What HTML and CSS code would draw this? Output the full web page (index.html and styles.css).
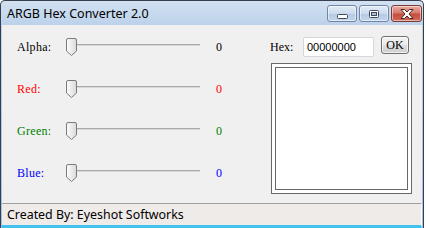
FILE: index.html
```html
<!DOCTYPE html>
<html lang="en">
  <head>
    <meta charset="utf-8">
    <title>ARGB Hex Converter 2.0</title>
    <link rel="stylesheet" href="styles.css">
  </head>
  <body>
    <div class="window">
      <div class="titlebar">
        <span class="title">ARGB Hex Converter 2.0</span>
        <div class="caption-buttons">
          <button class="cap cap-min">
            <svg width="11" height="5" viewBox="0 0 11 5"><rect x="0.5" y="0.5" width="10" height="4" rx="1" fill="#fff" stroke="#3c4a5c"/></svg>
          </button>
          <button class="cap cap-max">
            <svg width="10" height="8" viewBox="0 0 10 8"><rect x="0.5" y="0.5" width="9" height="7" rx="1" fill="#fff" stroke="#3c4a5c"/><rect x="2.5" y="2.5" width="5" height="3" fill="#aebfd6" stroke="#3c4a5c"/></svg>
          </button>
          <button class="cap cap-close">
            <svg width="14" height="10" viewBox="0 0 14 10"><path d="M1 0.5 H4.5 L7 3 L9.5 0.5 H13 L9 5 L13 9.5 H9.5 L7 7 L4.5 9.5 H1 L5 5 Z" fill="#fff" stroke="#4a2420" stroke-width="1" stroke-linejoin="round"/></svg>
          </button>
        </div>
      </div>

      <div class="client">
        <div class="channels">
          <div class="channel ch-alpha">
            <span class="label">Alpha:</span>
            <div class="slider">
              <div class="track"></div>
              <svg class="thumb" width="11" height="18" viewBox="0 0 11 18"><defs><linearGradient id="tg" x1="0" y1="0" x2="1" y2="0"><stop offset="0" stop-color="#fdfdfd"/><stop offset="1" stop-color="#d9d9d9"/></linearGradient></defs><path d="M0.5 2 Q0.5 0.5 2 0.5 H9 Q10.5 0.5 10.5 2 V13 L5.5 17.5 L0.5 13 Z" fill="url(#tg)" stroke="#7b7b7b"/></svg>
            </div>
            <span class="value">0</span>
          </div>
          <div class="channel ch-red">
            <span class="label">Red:</span>
            <div class="slider">
              <div class="track"></div>
              <svg class="thumb" width="11" height="18" viewBox="0 0 11 18"><path d="M0.5 2 Q0.5 0.5 2 0.5 H9 Q10.5 0.5 10.5 2 V13 L5.5 17.5 L0.5 13 Z" fill="url(#tg)" stroke="#7b7b7b"/></svg>
            </div>
            <span class="value">0</span>
          </div>
          <div class="channel ch-green">
            <span class="label">Green:</span>
            <div class="slider">
              <div class="track"></div>
              <svg class="thumb" width="11" height="18" viewBox="0 0 11 18"><path d="M0.5 2 Q0.5 0.5 2 0.5 H9 Q10.5 0.5 10.5 2 V13 L5.5 17.5 L0.5 13 Z" fill="url(#tg)" stroke="#7b7b7b"/></svg>
            </div>
            <span class="value">0</span>
          </div>
          <div class="channel ch-blue">
            <span class="label">Blue:</span>
            <div class="slider">
              <div class="track"></div>
              <svg class="thumb" width="11" height="18" viewBox="0 0 11 18"><path d="M0.5 2 Q0.5 0.5 2 0.5 H9 Q10.5 0.5 10.5 2 V13 L5.5 17.5 L0.5 13 Z" fill="url(#tg)" stroke="#7b7b7b"/></svg>
            </div>
            <span class="value">0</span>
          </div>
        </div>

        <div class="output">
          <div class="hex-row">
            <label class="hex-label" for="hex">Hex:</label>
            <input class="hex-input" id="hex" type="text" value="00000000">
            <button class="ok-button">OK</button>
          </div>
          <div class="preview">
            <div class="swatch"></div>
          </div>
        </div>
      </div>

      <div class="statusbar">Created By: Eyeshot Softworks</div>
    </div>
  </body>
</html>
```

FILE: styles.css
```css
html, body {
  margin: 0;
  padding: 0;
  width: 426px;
  height: 228px;
  overflow: hidden;
  background: #ffffff;
}
.window {
  box-sizing: border-box;
  width: 424px;
  height: 228px;
  display: flex;
  flex-direction: column;
  border: 1px solid #34404e;
  border-bottom: none;
  border-radius: 5px 5px 0 0;
  padding: 0 1px 0 1px;
  background: linear-gradient(#d3e1f1, #bcd2eb 24px, #9fc0e3);
}
.titlebar {
  height: 24px;
  display: flex;
  align-items: flex-start;
  font-family: "Noto Sans", sans-serif;
}
.title {
  font-size: 12.5px;
  line-height: 24px;
  padding: 1px 0 0 5px;
  color: #000;
}
.caption-buttons {
  margin-left: auto;
  margin-top: 4px;
  display: flex;
  gap: 2px;
}
.cap {
  box-sizing: border-box;
  width: 30px;
  height: 17px;
  padding: 0;
  display: flex;
  align-items: center;
  justify-content: center;
  border: 1px solid #6f86a6;
  border-radius: 3px;
  background: linear-gradient(#e4edf7, #cbdaec 50%, #b4c9e3 51%, #c3d6ec);
  box-shadow: inset 0 0 0 1px rgba(255,255,255,0.5);
}
.cap-min svg {
  margin-top: 6px;
}
.cap-max svg {
  margin-top: 1px;
}
.cap-close {
  width: 31px;
  border-color: #7d3a33;
  background: linear-gradient(#e9aca1, #d67c6d 45%, #c64e40 55%, #cf6a58);
}
.client {
  height: 178px;
  display: flex;
  background: #f0f0f0;
}
.channels {
  width: 268px;
  padding-top: 1px;
}
.channel {
  height: 42px;
  display: flex;
  align-items: center;
  padding-left: 15px;
  font-family: "Liberation Serif", serif;
  font-size: 12px;
  letter-spacing: 0.3px;
}
.label {
  width: 49px;
}
.slider {
  position: relative;
  width: 134px;
  height: 18px;
}
.track {
  position: absolute;
  left: 4px;
  right: 0;
  top: 6px;
  height: 1px;
  background: #a9a9a9;
  border-bottom: 1px solid #d8d8d8;
}
.thumb {
  position: absolute;
  left: 0;
  top: 0;
  display: block;
}
.value {
  margin-left: 16px;
}
.ch-alpha { color: #000000; }
.ch-red { color: #ff0000; }
.ch-green { color: #008000; }
.ch-blue { color: #0000ff; }

.output {
  padding-top: 11px;
}
.hex-row {
  display: flex;
  align-items: flex-start;
  height: 21px;
}
.hex-label {
  width: 33px;
  margin-top: 1px;
  line-height: 20px;
  font-family: "Liberation Serif", serif;
  font-size: 12px;
}
.hex-input {
  box-sizing: border-box;
  width: 71px;
  height: 20px;
  margin: 1px 0 0 0;
  padding: 0 3px;
  border: 1px solid #d3d7de;
  border-radius: 2px;
  background: #fff;
  font-family: "Liberation Sans", sans-serif;
  font-size: 11px;
  color: #000;
}
.ok-button {
  box-sizing: border-box;
  width: 28px;
  height: 18px;
  margin-left: 7px;
  padding: 0;
  border: 1px solid #707070;
  border-radius: 3px;
  background: linear-gradient(#f2f2f2, #ebebeb 50%, #dddddd 51%, #cfcfcf);
  box-shadow: inset 0 0 0 1px rgba(255,255,255,0.7);
  font-family: "Liberation Serif", serif;
  font-size: 12px;
  color: #000;
}
.preview {
  box-sizing: border-box;
  width: 141px;
  height: 131px;
  margin: 6px 0 0 1px;
  padding: 3px;
  border: 1px solid #686868;
  background: #fff;
}
.swatch {
  box-sizing: border-box;
  width: 100%;
  height: 100%;
  border: 1px solid #686868;
  background: #fff;
}
.statusbar {
  box-sizing: border-box;
  height: 25px;
  padding: 0 0 0 5px;
  border-top: 1px solid #a0a0a0;
  border-right: 1px solid #ffffff;
  border-bottom: 3px solid #3fc3ee;
  background: #efebe9;
  font-family: "Noto Sans", sans-serif;
  font-size: 12.4px;
  line-height: 21px;
  color: #000;
}
```
